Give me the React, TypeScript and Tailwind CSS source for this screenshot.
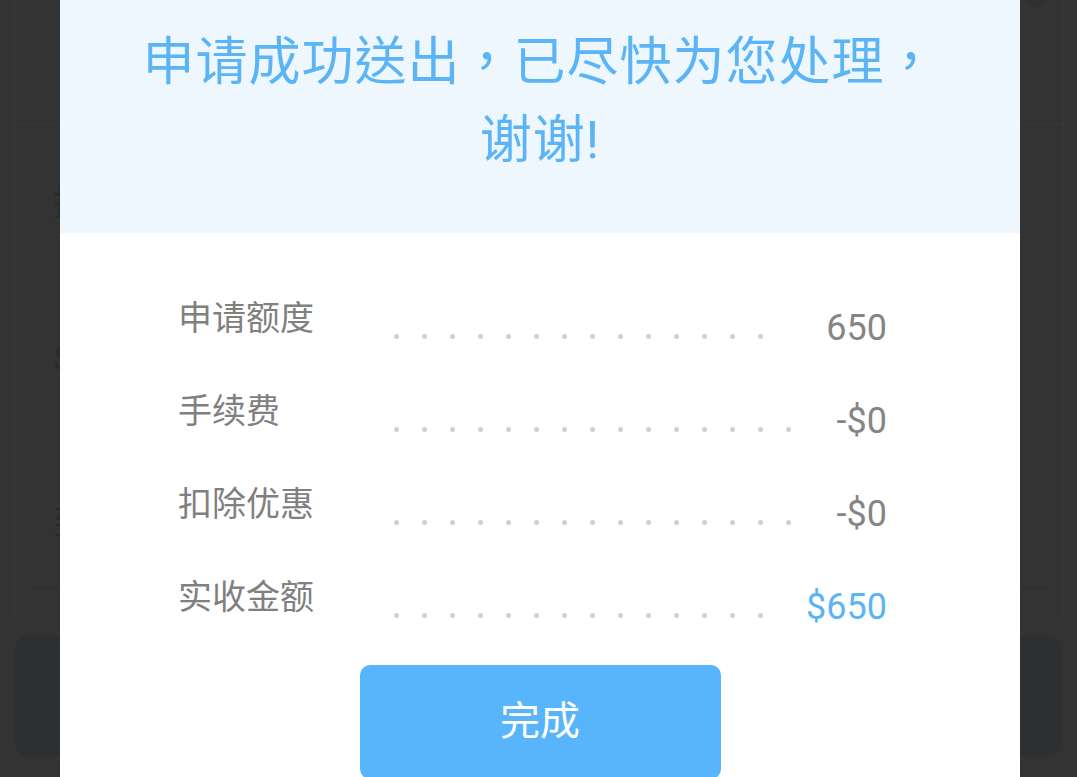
import React from "react";

const rows = [
  { label: "申请额度", value: "650", dots: 14, accent: false },
  { label: "手续费", value: "-$0", dots: 15, accent: false },
  { label: "扣除优惠", value: "-$0", dots: 15, accent: false },
  { label: "实收金额", value: "$650", dots: 14, accent: true },
];

function Dots({ count }: { count: number }) {
  return (
    <div className="mt-[36px] flex flex-1 gap-[23px]">
      {Array.from({ length: count }).map((_, i) => (
        <span key={i} className="h-[5px] w-[5px] shrink-0 rounded-full bg-[#d2ced2]" />
      ))}
    </div>
  );
}

export default function App() {
  return (
    <div
      className="relative h-[777px] w-full overflow-hidden bg-[#333333]"
      style={{ fontFamily: "Roboto, 'Noto Sans CJK TC', sans-serif" }}
    >
      {/* page under the dim layer */}
      <div className="flex h-full flex-col">
        <div className="ml-[14px] mr-[13px] flex h-[620px] flex-col border-x border-[#383838]">
          <div className="-mt-[34px] flex justify-end pr-[14px] text-[46px] font-bold leading-[50px] text-[#2c3136]">
            50
          </div>
          <div className="mt-[108px] border-t border-[#393939]" />
          <div className="mt-[58px] pl-[38px] text-[34px] leading-[40px] text-[#2a2a2a]">提现金额</div>
          <div className="mt-[115px] pl-[38px] text-[34px] leading-[40px] text-[#2a2a2a]">$ 650</div>
          <div className="mt-[125px] pl-[38px] text-[34px] leading-[40px] text-[#2a2a2a]">到账账户</div>
          <div className="mx-[16px] mt-[43px] h-[3px] bg-[#2c3135]" />
        </div>
        <div className="mx-[15px] mt-[16px] h-[120px] rounded-[14px] bg-[#2c3033]" />
      </div>

      {/* result dialog */}
      <div className="absolute inset-x-0 top-0 flex justify-center pl-[3px]">
        <div className="w-[960px] bg-white">
          <div className="bg-[#eef6fe] px-[70px] pb-[53px] pt-[24px] text-center text-[52px] leading-[78px] tracking-[1px] text-[#5ab4f5]">
            申请成功送出，已尽快为您处理，谢谢!
          </div>

          <div className="flex flex-col pt-[65px]">
            <div className="flex flex-col gap-[43px] pl-[118px] pr-[133px]">
              {rows.map((r) => (
                <div key={r.label} className="flex h-[50px] items-start">
                  <div className="w-[216px] shrink-0 text-[34px] leading-[40px] text-[#808080]">{r.label}</div>
                  <Dots count={r.dots} />
                  <div
                    className={
                      "mt-[10px] shrink-0 text-[36px] leading-[40px] " +
                      (r.accent ? "text-[#5ab4f5]" : "text-[#858585]")
                    }
                  >
                    {r.value}
                  </div>
                </div>
              ))}
            </div>

            <button className="mx-auto mt-[38px] h-[114px] w-[361px] rounded-[10px] bg-[#58b4fb] text-[40px] text-white">
              完成
            </button>
          </div>
        </div>
      </div>
    </div>
  );
}
